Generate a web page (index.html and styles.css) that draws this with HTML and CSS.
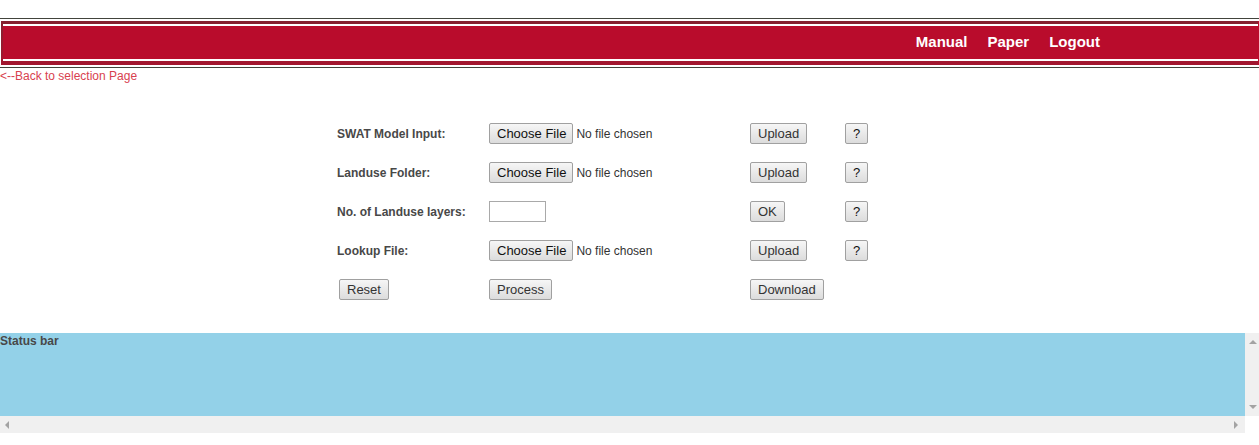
FILE: index.html
```html
<!DOCTYPE html>
<html lang="en">
<head>
<meta charset="utf-8">
<title>SWAT Landuse Update</title>
<link rel="stylesheet" href="styles.css">
</head>
<body>
<header class="banner">
  <div class="banner-frame">
    <nav class="banner-nav">
      <a href="#manual">Manual</a>
      <a href="#paper">Paper</a>
      <a href="#logout">Logout</a>
    </nav>
  </div>
</header>
<a class="back" href="#selection">&lt;--Back to selection Page</a>
<main>
  <form class="inputs">
    <label for="swat">SWAT Model Input:</label>
    <input type="file" id="swat">
    <button type="button">Upload</button>
    <button type="button" class="help">?</button>

    <label for="landuse">Landuse Folder:</label>
    <input type="file" id="landuse">
    <button type="button">Upload</button>
    <button type="button" class="help">?</button>

    <label for="layers">No. of Landuse layers:</label>
    <input type="text" id="layers" class="layers">
    <button type="button">OK</button>
    <button type="button" class="help">?</button>

    <label for="lookup">Lookup File:</label>
    <input type="file" id="lookup">
    <button type="button">Upload</button>
    <button type="button" class="help">?</button>

    <button type="reset" class="reset">Reset</button>
    <button type="button">Process</button>
    <button type="button">Download</button>
  </form>
</main>
<section class="status">
  <div class="status-text">Status bar</div>
  <div class="scroll scroll-y">
    <button type="button" class="arrow" aria-label="Scroll up"><svg width="8" height="4" viewBox="0 0 8 4"><path d="M4 0L8 4H0Z"/></svg></button>
    <button type="button" class="arrow" aria-label="Scroll down"><svg width="8" height="4" viewBox="0 0 8 4"><path d="M0 0H8L4 4Z"/></svg></button>
  </div>
  <div class="scroll scroll-x">
    <button type="button" class="arrow" aria-label="Scroll left"><svg width="4" height="8" viewBox="0 0 4 8"><path d="M4 0V8L0 4Z"/></svg></button>
    <button type="button" class="arrow" aria-label="Scroll right"><svg width="4" height="8" viewBox="0 0 4 8"><path d="M0 0L4 4L0 8Z"/></svg></button>
  </div>
</section>
</body>
</html>
```
FILE: styles.css
```css
body {
  margin: 0;
  padding-top: 18px;
  background: #fff;
  color: #484848;
  font: 12px/16px "Liberation Sans", Arial, sans-serif;
}

.banner {
  padding: 2px 0 2px 1px;
  border-top: 1px solid #42443c;
  border-bottom: 1px solid #42443c;
}

.banner-frame {
  padding: 3px 0 4px 2px;
  background: linear-gradient(#85202f, #a3162f);
  border-right: 1px solid #b90c2c;
}

.banner-nav {
  display: flex;
  justify-content: flex-end;
  align-items: center;
  gap: 20px;
  height: 31px;
  padding: 0 158px 2px 0;
  border: solid #fff;
  border-width: 2px 0;
  background: #b90c2c;
}

.banner-nav a {
  color: #fff;
  font-size: 15px;
  font-weight: bold;
  text-decoration: none;
}

.back {
  display: block;
  color: #d8414f;
  text-decoration: none;
}

.inputs {
  display: grid;
  grid-template-columns: 152px 261px 95px 77px;
  gap: 18px 0;
  justify-content: center;
  justify-items: start;
  align-items: center;
  padding: 39px 0 33px;
}

.inputs label {
  font-weight: bold;
}

.inputs button,
.inputs input::file-selector-button {
  box-sizing: border-box;
  height: 21px;
  margin: 0;
  padding: 0 7px;
  border: 1px solid #a0a0a0;
  border-radius: 2px;
  background: linear-gradient(#f6f6f6, #dcdcdc);
  color: #333;
  font: 13px/19px "Liberation Sans", Arial, sans-serif;
}

.inputs input[type="file"] {
  width: 250px;
  height: 21px;
  color: #333;
  font: 12px/21px "Liberation Sans", Arial, sans-serif;
}

.inputs input::file-selector-button {
  margin-right: 3px;
  padding: 0 6px 0 7px;
  color: #111;
}

.inputs .layers {
  box-sizing: border-box;
  width: 57px;
  height: 21px;
  padding: 1px;
  border: 1px solid #a9a9a9;
  background: #fff;
}

.inputs .reset {
  margin-left: 2px;
}

.inputs .help {
  color: #111;
}

.status {
  display: grid;
  grid-template-columns: 1fr 14px;
  grid-template-rows: 83px 17px;
}

.status-text {
  background: #93d1e8;
  font-weight: bold;
}

.scroll {
  display: flex;
  justify-content: space-between;
  align-items: center;
  background: #f0f0f0;
}

.scroll-y {
  flex-direction: column;
  padding: 7px 0 7px 2px;
}

.scroll-x {
  padding: 0 7px 0 5px;
}

.arrow {
  display: flex;
  padding: 0;
  border: 0;
  background: none;
  fill: #a3a3a3;
}
```
